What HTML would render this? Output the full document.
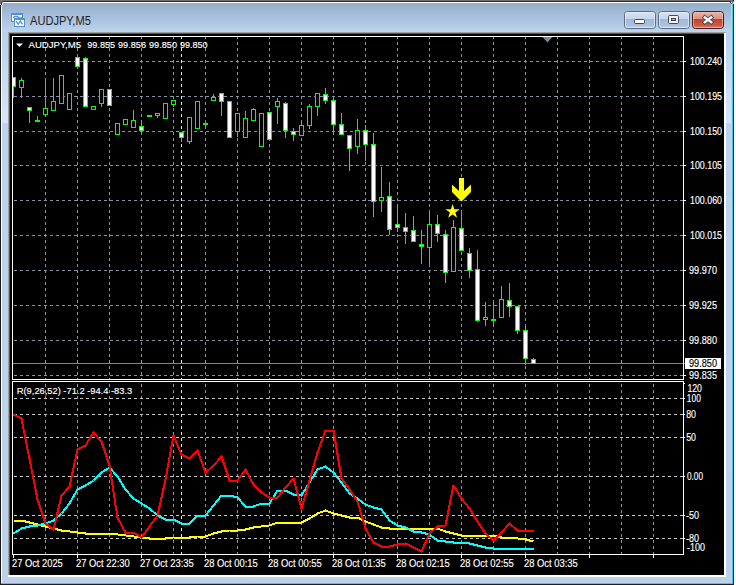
<!DOCTYPE html>
<html><head><meta charset="utf-8"><title>AUDJPY,M5</title>
<style>html,body{margin:0;padding:0;background:#fff;width:736px;height:585px;overflow:hidden;position:relative}</style>
</head><body>
<svg width="736" height="585" viewBox="0 0 736 585" style="position:absolute;left:0;top:0;display:block"><defs>
<linearGradient id="tb" x1="0" y1="0" x2="0" y2="1">
<stop offset="0" stop-color="#93adca"/><stop offset="1" stop-color="#bdd4ee"/></linearGradient>
<linearGradient id="frm" x1="0" y1="0" x2="0" y2="585" gradientUnits="userSpaceOnUse">
<stop offset="0.0547" stop-color="#b9d1eb"/><stop offset="0.2100" stop-color="#d8e6f5"/><stop offset="0.2101" stop-color="#bdd4ec"/><stop offset="1" stop-color="#bcd2ea"/></linearGradient>
<linearGradient id="btn" x1="0" y1="0" x2="0" y2="1">
<stop offset="0" stop-color="#d6e4f3"/><stop offset="0.43" stop-color="#c4d6ec"/>
<stop offset="0.45" stop-color="#a2b9d6"/><stop offset="0.8" stop-color="#aac0dc"/><stop offset="1" stop-color="#c0d3ea"/></linearGradient>
<linearGradient id="cls" x1="0" y1="0" x2="0" y2="1">
<stop offset="0" stop-color="#ecb4a6"/><stop offset="0.43" stop-color="#dd9282"/>
<stop offset="0.45" stop-color="#c0402a"/><stop offset="0.8" stop-color="#c85a44"/><stop offset="1" stop-color="#dc8470"/></linearGradient>
</defs><rect x="0" y="0" width="736" height="585" fill="#ffffff" /><rect x="0" y="0" width="734" height="585" fill="url(#frm)" /><rect x="2" y="3" width="730" height="29" fill="url(#tb)" /><rect x="0" y="0" width="734" height="1" fill="#707070" /><rect x="0" y="1" width="734" height="1" fill="#2e2e2e" /><rect x="1" y="2" width="732" height="1" fill="#ffffff" /><rect x="0" y="0" width="1" height="585" fill="#1a1a1a" /><rect x="1" y="2" width="1" height="581" fill="#ffffff" /><rect x="731" y="3" width="1" height="580" fill="#bcd4ee" /><rect x="732" y="2" width="1" height="582" fill="#40c8ee" /><rect x="733" y="0" width="1" height="585" fill="#1e1e1e" /><rect x="1" y="583" width="732" height="1" fill="#40c8ee" /><rect x="0" y="584" width="734" height="1" fill="#1e1e1e" /><rect x="0" y="0" width="1" height="1" fill="#707070" /><rect x="0" y="1" width="1" height="1" fill="#707070" /><rect x="1" y="1" width="1" height="1" fill="#707070" /><rect x="2" y="1" width="1" height="1" fill="#505050" /><rect x="3" y="1" width="1" height="1" fill="#3a3a3a" /><rect x="0" y="2" width="1" height="1" fill="#6a6a6a" /><rect x="1" y="2" width="1" height="1" fill="#3a3a3a" /><rect x="2" y="2" width="1" height="1" fill="#9a9a9a" /><rect x="3" y="2" width="1" height="1" fill="#e8e8e8" /><rect x="0" y="3" width="1" height="1" fill="#8a8a8a" /><rect x="1" y="3" width="1" height="1" fill="#2a2a2a" /><rect x="2" y="3" width="1" height="1" fill="#e6edf4" /><rect x="0" y="4" width="1" height="1" fill="#d0d0d0" /><rect x="1" y="4" width="1" height="1" fill="#2a2a2a" /><rect x="2" y="4" width="1" height="1" fill="#f0f4f8" /><rect x="731" y="1" width="1" height="1" fill="#707070" /><rect x="732" y="1" width="1" height="1" fill="#707070" /><rect x="733" y="1" width="1" height="1" fill="#707070" /><rect x="730" y="1" width="1" height="1" fill="#2a4450" /><rect x="730" y="2" width="1" height="1" fill="#2a4a58" /><rect x="731" y="2" width="1" height="1" fill="#a8e4f4" /><rect x="732" y="2" width="1" height="1" fill="#707070" /><rect x="733" y="2" width="1" height="1" fill="#d8d8d8" /><rect x="731" y="3" width="1" height="1" fill="#2e5060" /><rect x="732" y="3" width="1" height="1" fill="#8ad8f0" /><rect x="733" y="3" width="1" height="1" fill="#d0d0d0" /><rect x="732" y="4" width="1" height="1" fill="#40c8ee" /><rect x="733" y="4" width="1" height="1" fill="#1e1e1e" /><rect x="8" y="32" width="718" height="1" fill="#a0a0a0" /><rect x="8" y="32" width="1" height="545" fill="#a0a0a0" /><rect x="9" y="33" width="716" height="1" fill="#555555" /><rect x="9" y="33" width="1" height="543" fill="#555555" /><rect x="724" y="33" width="2" height="544" fill="#ffffff" /><rect x="8" y="575" width="718" height="2" fill="#ffffff" /><rect x="10" y="34" width="714" height="541" fill="#000000" /><g shape-rendering="crispEdges"><path d="M14 61h3M20 61h3M26 61h3M32 61h3M38 61h3M44 61h3M50 61h3M56 61h3M62 61h3M68 61h3M74 61h3M80 61h3M86 61h3M92 61h3M98 61h3M104 61h3M110 61h3M116 61h3M122 61h3M128 61h3M134 61h3M140 61h3M146 61h3M152 61h3M158 61h3M164 61h3M170 61h3M176 61h3M182 61h3M188 61h3M194 61h3M200 61h3M206 61h3M212 61h3M218 61h3M224 61h3M230 61h3M236 61h3M242 61h3M248 61h3M254 61h3M260 61h3M266 61h3M272 61h3M278 61h3M284 61h3M290 61h3M296 61h3M302 61h3M308 61h3M314 61h3M320 61h3M326 61h3M332 61h3M338 61h3M344 61h3M350 61h3M356 61h3M362 61h3M368 61h3M374 61h3M380 61h3M386 61h3M392 61h3M398 61h3M404 61h3M410 61h3M416 61h3M422 61h3M428 61h3M434 61h3M440 61h3M446 61h3M452 61h3M458 61h3M464 61h3M470 61h3M476 61h3M482 61h3M488 61h3M494 61h3M500 61h3M506 61h3M512 61h3M518 61h3M524 61h3M530 61h3M536 61h3M542 61h3M548 61h3M554 61h3M560 61h3M566 61h3M572 61h3M578 61h3M584 61h3M590 61h3M596 61h3M602 61h3M608 61h3M614 61h3M620 61h3M626 61h3M632 61h3M638 61h3M644 61h3M650 61h3M656 61h3M662 61h3M668 61h3M674 61h3M680 61h3" stroke="#8595a8" stroke-width="1" transform="translate(0,0.5)" fill="none"/><path d="M14 96h3M20 96h3M26 96h3M32 96h3M38 96h3M44 96h3M50 96h3M56 96h3M62 96h3M68 96h3M74 96h3M80 96h3M86 96h3M92 96h3M98 96h3M104 96h3M110 96h3M116 96h3M122 96h3M128 96h3M134 96h3M140 96h3M146 96h3M152 96h3M158 96h3M164 96h3M170 96h3M176 96h3M182 96h3M188 96h3M194 96h3M200 96h3M206 96h3M212 96h3M218 96h3M224 96h3M230 96h3M236 96h3M242 96h3M248 96h3M254 96h3M260 96h3M266 96h3M272 96h3M278 96h3M284 96h3M290 96h3M296 96h3M302 96h3M308 96h3M314 96h3M320 96h3M326 96h3M332 96h3M338 96h3M344 96h3M350 96h3M356 96h3M362 96h3M368 96h3M374 96h3M380 96h3M386 96h3M392 96h3M398 96h3M404 96h3M410 96h3M416 96h3M422 96h3M428 96h3M434 96h3M440 96h3M446 96h3M452 96h3M458 96h3M464 96h3M470 96h3M476 96h3M482 96h3M488 96h3M494 96h3M500 96h3M506 96h3M512 96h3M518 96h3M524 96h3M530 96h3M536 96h3M542 96h3M548 96h3M554 96h3M560 96h3M566 96h3M572 96h3M578 96h3M584 96h3M590 96h3M596 96h3M602 96h3M608 96h3M614 96h3M620 96h3M626 96h3M632 96h3M638 96h3M644 96h3M650 96h3M656 96h3M662 96h3M668 96h3M674 96h3M680 96h3" stroke="#8595a8" stroke-width="1" transform="translate(0,0.5)" fill="none"/><path d="M14 131h3M20 131h3M26 131h3M32 131h3M38 131h3M44 131h3M50 131h3M56 131h3M62 131h3M68 131h3M74 131h3M80 131h3M86 131h3M92 131h3M98 131h3M104 131h3M110 131h3M116 131h3M122 131h3M128 131h3M134 131h3M140 131h3M146 131h3M152 131h3M158 131h3M164 131h3M170 131h3M176 131h3M182 131h3M188 131h3M194 131h3M200 131h3M206 131h3M212 131h3M218 131h3M224 131h3M230 131h3M236 131h3M242 131h3M248 131h3M254 131h3M260 131h3M266 131h3M272 131h3M278 131h3M284 131h3M290 131h3M296 131h3M302 131h3M308 131h3M314 131h3M320 131h3M326 131h3M332 131h3M338 131h3M344 131h3M350 131h3M356 131h3M362 131h3M368 131h3M374 131h3M380 131h3M386 131h3M392 131h3M398 131h3M404 131h3M410 131h3M416 131h3M422 131h3M428 131h3M434 131h3M440 131h3M446 131h3M452 131h3M458 131h3M464 131h3M470 131h3M476 131h3M482 131h3M488 131h3M494 131h3M500 131h3M506 131h3M512 131h3M518 131h3M524 131h3M530 131h3M536 131h3M542 131h3M548 131h3M554 131h3M560 131h3M566 131h3M572 131h3M578 131h3M584 131h3M590 131h3M596 131h3M602 131h3M608 131h3M614 131h3M620 131h3M626 131h3M632 131h3M638 131h3M644 131h3M650 131h3M656 131h3M662 131h3M668 131h3M674 131h3M680 131h3" stroke="#8595a8" stroke-width="1" transform="translate(0,0.5)" fill="none"/><path d="M14 165h3M20 165h3M26 165h3M32 165h3M38 165h3M44 165h3M50 165h3M56 165h3M62 165h3M68 165h3M74 165h3M80 165h3M86 165h3M92 165h3M98 165h3M104 165h3M110 165h3M116 165h3M122 165h3M128 165h3M134 165h3M140 165h3M146 165h3M152 165h3M158 165h3M164 165h3M170 165h3M176 165h3M182 165h3M188 165h3M194 165h3M200 165h3M206 165h3M212 165h3M218 165h3M224 165h3M230 165h3M236 165h3M242 165h3M248 165h3M254 165h3M260 165h3M266 165h3M272 165h3M278 165h3M284 165h3M290 165h3M296 165h3M302 165h3M308 165h3M314 165h3M320 165h3M326 165h3M332 165h3M338 165h3M344 165h3M350 165h3M356 165h3M362 165h3M368 165h3M374 165h3M380 165h3M386 165h3M392 165h3M398 165h3M404 165h3M410 165h3M416 165h3M422 165h3M428 165h3M434 165h3M440 165h3M446 165h3M452 165h3M458 165h3M464 165h3M470 165h3M476 165h3M482 165h3M488 165h3M494 165h3M500 165h3M506 165h3M512 165h3M518 165h3M524 165h3M530 165h3M536 165h3M542 165h3M548 165h3M554 165h3M560 165h3M566 165h3M572 165h3M578 165h3M584 165h3M590 165h3M596 165h3M602 165h3M608 165h3M614 165h3M620 165h3M626 165h3M632 165h3M638 165h3M644 165h3M650 165h3M656 165h3M662 165h3M668 165h3M674 165h3M680 165h3" stroke="#8595a8" stroke-width="1" transform="translate(0,0.5)" fill="none"/><path d="M14 200h3M20 200h3M26 200h3M32 200h3M38 200h3M44 200h3M50 200h3M56 200h3M62 200h3M68 200h3M74 200h3M80 200h3M86 200h3M92 200h3M98 200h3M104 200h3M110 200h3M116 200h3M122 200h3M128 200h3M134 200h3M140 200h3M146 200h3M152 200h3M158 200h3M164 200h3M170 200h3M176 200h3M182 200h3M188 200h3M194 200h3M200 200h3M206 200h3M212 200h3M218 200h3M224 200h3M230 200h3M236 200h3M242 200h3M248 200h3M254 200h3M260 200h3M266 200h3M272 200h3M278 200h3M284 200h3M290 200h3M296 200h3M302 200h3M308 200h3M314 200h3M320 200h3M326 200h3M332 200h3M338 200h3M344 200h3M350 200h3M356 200h3M362 200h3M368 200h3M374 200h3M380 200h3M386 200h3M392 200h3M398 200h3M404 200h3M410 200h3M416 200h3M422 200h3M428 200h3M434 200h3M440 200h3M446 200h3M452 200h3M458 200h3M464 200h3M470 200h3M476 200h3M482 200h3M488 200h3M494 200h3M500 200h3M506 200h3M512 200h3M518 200h3M524 200h3M530 200h3M536 200h3M542 200h3M548 200h3M554 200h3M560 200h3M566 200h3M572 200h3M578 200h3M584 200h3M590 200h3M596 200h3M602 200h3M608 200h3M614 200h3M620 200h3M626 200h3M632 200h3M638 200h3M644 200h3M650 200h3M656 200h3M662 200h3M668 200h3M674 200h3M680 200h3" stroke="#8595a8" stroke-width="1" transform="translate(0,0.5)" fill="none"/><path d="M14 235h3M20 235h3M26 235h3M32 235h3M38 235h3M44 235h3M50 235h3M56 235h3M62 235h3M68 235h3M74 235h3M80 235h3M86 235h3M92 235h3M98 235h3M104 235h3M110 235h3M116 235h3M122 235h3M128 235h3M134 235h3M140 235h3M146 235h3M152 235h3M158 235h3M164 235h3M170 235h3M176 235h3M182 235h3M188 235h3M194 235h3M200 235h3M206 235h3M212 235h3M218 235h3M224 235h3M230 235h3M236 235h3M242 235h3M248 235h3M254 235h3M260 235h3M266 235h3M272 235h3M278 235h3M284 235h3M290 235h3M296 235h3M302 235h3M308 235h3M314 235h3M320 235h3M326 235h3M332 235h3M338 235h3M344 235h3M350 235h3M356 235h3M362 235h3M368 235h3M374 235h3M380 235h3M386 235h3M392 235h3M398 235h3M404 235h3M410 235h3M416 235h3M422 235h3M428 235h3M434 235h3M440 235h3M446 235h3M452 235h3M458 235h3M464 235h3M470 235h3M476 235h3M482 235h3M488 235h3M494 235h3M500 235h3M506 235h3M512 235h3M518 235h3M524 235h3M530 235h3M536 235h3M542 235h3M548 235h3M554 235h3M560 235h3M566 235h3M572 235h3M578 235h3M584 235h3M590 235h3M596 235h3M602 235h3M608 235h3M614 235h3M620 235h3M626 235h3M632 235h3M638 235h3M644 235h3M650 235h3M656 235h3M662 235h3M668 235h3M674 235h3M680 235h3" stroke="#8595a8" stroke-width="1" transform="translate(0,0.5)" fill="none"/><path d="M14 270h3M20 270h3M26 270h3M32 270h3M38 270h3M44 270h3M50 270h3M56 270h3M62 270h3M68 270h3M74 270h3M80 270h3M86 270h3M92 270h3M98 270h3M104 270h3M110 270h3M116 270h3M122 270h3M128 270h3M134 270h3M140 270h3M146 270h3M152 270h3M158 270h3M164 270h3M170 270h3M176 270h3M182 270h3M188 270h3M194 270h3M200 270h3M206 270h3M212 270h3M218 270h3M224 270h3M230 270h3M236 270h3M242 270h3M248 270h3M254 270h3M260 270h3M266 270h3M272 270h3M278 270h3M284 270h3M290 270h3M296 270h3M302 270h3M308 270h3M314 270h3M320 270h3M326 270h3M332 270h3M338 270h3M344 270h3M350 270h3M356 270h3M362 270h3M368 270h3M374 270h3M380 270h3M386 270h3M392 270h3M398 270h3M404 270h3M410 270h3M416 270h3M422 270h3M428 270h3M434 270h3M440 270h3M446 270h3M452 270h3M458 270h3M464 270h3M470 270h3M476 270h3M482 270h3M488 270h3M494 270h3M500 270h3M506 270h3M512 270h3M518 270h3M524 270h3M530 270h3M536 270h3M542 270h3M548 270h3M554 270h3M560 270h3M566 270h3M572 270h3M578 270h3M584 270h3M590 270h3M596 270h3M602 270h3M608 270h3M614 270h3M620 270h3M626 270h3M632 270h3M638 270h3M644 270h3M650 270h3M656 270h3M662 270h3M668 270h3M674 270h3M680 270h3" stroke="#8595a8" stroke-width="1" transform="translate(0,0.5)" fill="none"/><path d="M14 305h3M20 305h3M26 305h3M32 305h3M38 305h3M44 305h3M50 305h3M56 305h3M62 305h3M68 305h3M74 305h3M80 305h3M86 305h3M92 305h3M98 305h3M104 305h3M110 305h3M116 305h3M122 305h3M128 305h3M134 305h3M140 305h3M146 305h3M152 305h3M158 305h3M164 305h3M170 305h3M176 305h3M182 305h3M188 305h3M194 305h3M200 305h3M206 305h3M212 305h3M218 305h3M224 305h3M230 305h3M236 305h3M242 305h3M248 305h3M254 305h3M260 305h3M266 305h3M272 305h3M278 305h3M284 305h3M290 305h3M296 305h3M302 305h3M308 305h3M314 305h3M320 305h3M326 305h3M332 305h3M338 305h3M344 305h3M350 305h3M356 305h3M362 305h3M368 305h3M374 305h3M380 305h3M386 305h3M392 305h3M398 305h3M404 305h3M410 305h3M416 305h3M422 305h3M428 305h3M434 305h3M440 305h3M446 305h3M452 305h3M458 305h3M464 305h3M470 305h3M476 305h3M482 305h3M488 305h3M494 305h3M500 305h3M506 305h3M512 305h3M518 305h3M524 305h3M530 305h3M536 305h3M542 305h3M548 305h3M554 305h3M560 305h3M566 305h3M572 305h3M578 305h3M584 305h3M590 305h3M596 305h3M602 305h3M608 305h3M614 305h3M620 305h3M626 305h3M632 305h3M638 305h3M644 305h3M650 305h3M656 305h3M662 305h3M668 305h3M674 305h3M680 305h3" stroke="#8595a8" stroke-width="1" transform="translate(0,0.5)" fill="none"/><path d="M14 340h3M20 340h3M26 340h3M32 340h3M38 340h3M44 340h3M50 340h3M56 340h3M62 340h3M68 340h3M74 340h3M80 340h3M86 340h3M92 340h3M98 340h3M104 340h3M110 340h3M116 340h3M122 340h3M128 340h3M134 340h3M140 340h3M146 340h3M152 340h3M158 340h3M164 340h3M170 340h3M176 340h3M182 340h3M188 340h3M194 340h3M200 340h3M206 340h3M212 340h3M218 340h3M224 340h3M230 340h3M236 340h3M242 340h3M248 340h3M254 340h3M260 340h3M266 340h3M272 340h3M278 340h3M284 340h3M290 340h3M296 340h3M302 340h3M308 340h3M314 340h3M320 340h3M326 340h3M332 340h3M338 340h3M344 340h3M350 340h3M356 340h3M362 340h3M368 340h3M374 340h3M380 340h3M386 340h3M392 340h3M398 340h3M404 340h3M410 340h3M416 340h3M422 340h3M428 340h3M434 340h3M440 340h3M446 340h3M452 340h3M458 340h3M464 340h3M470 340h3M476 340h3M482 340h3M488 340h3M494 340h3M500 340h3M506 340h3M512 340h3M518 340h3M524 340h3M530 340h3M536 340h3M542 340h3M548 340h3M554 340h3M560 340h3M566 340h3M572 340h3M578 340h3M584 340h3M590 340h3M596 340h3M602 340h3M608 340h3M614 340h3M620 340h3M626 340h3M632 340h3M638 340h3M644 340h3M650 340h3M656 340h3M662 340h3M668 340h3M674 340h3M680 340h3" stroke="#8595a8" stroke-width="1" transform="translate(0,0.5)" fill="none"/><path d="M14 375h3M20 375h3M26 375h3M32 375h3M38 375h3M44 375h3M50 375h3M56 375h3M62 375h3M68 375h3M74 375h3M80 375h3M86 375h3M92 375h3M98 375h3M104 375h3M110 375h3M116 375h3M122 375h3M128 375h3M134 375h3M140 375h3M146 375h3M152 375h3M158 375h3M164 375h3M170 375h3M176 375h3M182 375h3M188 375h3M194 375h3M200 375h3M206 375h3M212 375h3M218 375h3M224 375h3M230 375h3M236 375h3M242 375h3M248 375h3M254 375h3M260 375h3M266 375h3M272 375h3M278 375h3M284 375h3M290 375h3M296 375h3M302 375h3M308 375h3M314 375h3M320 375h3M326 375h3M332 375h3M338 375h3M344 375h3M350 375h3M356 375h3M362 375h3M368 375h3M374 375h3M380 375h3M386 375h3M392 375h3M398 375h3M404 375h3M410 375h3M416 375h3M422 375h3M428 375h3M434 375h3M440 375h3M446 375h3M452 375h3M458 375h3M464 375h3M470 375h3M476 375h3M482 375h3M488 375h3M494 375h3M500 375h3M506 375h3M512 375h3M518 375h3M524 375h3M530 375h3M536 375h3M542 375h3M548 375h3M554 375h3M560 375h3M566 375h3M572 375h3M578 375h3M584 375h3M590 375h3M596 375h3M602 375h3M608 375h3M614 375h3M620 375h3M626 375h3M632 375h3M638 375h3M644 375h3M650 375h3M656 375h3M662 375h3M668 375h3M674 375h3M680 375h3" stroke="#8595a8" stroke-width="1" transform="translate(0,0.5)" fill="none"/><path d="M45 37v2M45 42v3M45 48v3M45 54v3M45 60v3M45 66v3M45 72v3M45 78v3M45 84v3M45 90v3M45 96v3M45 102v3M45 108v3M45 114v3M45 120v3M45 126v3M45 132v3M45 138v3M45 144v3M45 150v3M45 156v3M45 162v3M45 168v3M45 174v3M45 180v3M45 186v3M45 192v3M45 198v3M45 204v3M45 210v3M45 216v3M45 222v3M45 228v3M45 234v3M45 240v3M45 246v3M45 252v3M45 258v3M45 264v3M45 270v3M45 276v3M45 282v3M45 288v3M45 294v3M45 300v3M45 306v3M45 312v3M45 318v3M45 324v3M45 330v3M45 336v3M45 342v3M45 348v3M45 354v3M45 360v3M45 366v3M45 372v3M45 378v1" stroke="#8595a8" stroke-width="1" transform="translate(0.5,0)" fill="none"/><path d="M45 384v3M45 390v3M45 396v3M45 402v3M45 408v3M45 414v3M45 420v3M45 426v3M45 432v3M45 438v3M45 444v3M45 450v3M45 456v3M45 462v3M45 468v3M45 474v3M45 480v3M45 486v3M45 492v3M45 498v3M45 504v3M45 510v3M45 516v3M45 522v3M45 528v3M45 534v3M45 540v3M45 546v3M45 552v2" stroke="#8595a8" stroke-width="1" transform="translate(0.5,0)" fill="none"/><path d="M77 37v2M77 42v3M77 48v3M77 54v3M77 60v3M77 66v3M77 72v3M77 78v3M77 84v3M77 90v3M77 96v3M77 102v3M77 108v3M77 114v3M77 120v3M77 126v3M77 132v3M77 138v3M77 144v3M77 150v3M77 156v3M77 162v3M77 168v3M77 174v3M77 180v3M77 186v3M77 192v3M77 198v3M77 204v3M77 210v3M77 216v3M77 222v3M77 228v3M77 234v3M77 240v3M77 246v3M77 252v3M77 258v3M77 264v3M77 270v3M77 276v3M77 282v3M77 288v3M77 294v3M77 300v3M77 306v3M77 312v3M77 318v3M77 324v3M77 330v3M77 336v3M77 342v3M77 348v3M77 354v3M77 360v3M77 366v3M77 372v3M77 378v1" stroke="#8595a8" stroke-width="1" transform="translate(0.5,0)" fill="none"/><path d="M77 384v3M77 390v3M77 396v3M77 402v3M77 408v3M77 414v3M77 420v3M77 426v3M77 432v3M77 438v3M77 444v3M77 450v3M77 456v3M77 462v3M77 468v3M77 474v3M77 480v3M77 486v3M77 492v3M77 498v3M77 504v3M77 510v3M77 516v3M77 522v3M77 528v3M77 534v3M77 540v3M77 546v3M77 552v2" stroke="#8595a8" stroke-width="1" transform="translate(0.5,0)" fill="none"/><path d="M109 37v2M109 42v3M109 48v3M109 54v3M109 60v3M109 66v3M109 72v3M109 78v3M109 84v3M109 90v3M109 96v3M109 102v3M109 108v3M109 114v3M109 120v3M109 126v3M109 132v3M109 138v3M109 144v3M109 150v3M109 156v3M109 162v3M109 168v3M109 174v3M109 180v3M109 186v3M109 192v3M109 198v3M109 204v3M109 210v3M109 216v3M109 222v3M109 228v3M109 234v3M109 240v3M109 246v3M109 252v3M109 258v3M109 264v3M109 270v3M109 276v3M109 282v3M109 288v3M109 294v3M109 300v3M109 306v3M109 312v3M109 318v3M109 324v3M109 330v3M109 336v3M109 342v3M109 348v3M109 354v3M109 360v3M109 366v3M109 372v3M109 378v1" stroke="#8595a8" stroke-width="1" transform="translate(0.5,0)" fill="none"/><path d="M109 384v3M109 390v3M109 396v3M109 402v3M109 408v3M109 414v3M109 420v3M109 426v3M109 432v3M109 438v3M109 444v3M109 450v3M109 456v3M109 462v3M109 468v3M109 474v3M109 480v3M109 486v3M109 492v3M109 498v3M109 504v3M109 510v3M109 516v3M109 522v3M109 528v3M109 534v3M109 540v3M109 546v3M109 552v2" stroke="#8595a8" stroke-width="1" transform="translate(0.5,0)" fill="none"/><path d="M141 37v2M141 42v3M141 48v3M141 54v3M141 60v3M141 66v3M141 72v3M141 78v3M141 84v3M141 90v3M141 96v3M141 102v3M141 108v3M141 114v3M141 120v3M141 126v3M141 132v3M141 138v3M141 144v3M141 150v3M141 156v3M141 162v3M141 168v3M141 174v3M141 180v3M141 186v3M141 192v3M141 198v3M141 204v3M141 210v3M141 216v3M141 222v3M141 228v3M141 234v3M141 240v3M141 246v3M141 252v3M141 258v3M141 264v3M141 270v3M141 276v3M141 282v3M141 288v3M141 294v3M141 300v3M141 306v3M141 312v3M141 318v3M141 324v3M141 330v3M141 336v3M141 342v3M141 348v3M141 354v3M141 360v3M141 366v3M141 372v3M141 378v1" stroke="#8595a8" stroke-width="1" transform="translate(0.5,0)" fill="none"/><path d="M141 384v3M141 390v3M141 396v3M141 402v3M141 408v3M141 414v3M141 420v3M141 426v3M141 432v3M141 438v3M141 444v3M141 450v3M141 456v3M141 462v3M141 468v3M141 474v3M141 480v3M141 486v3M141 492v3M141 498v3M141 504v3M141 510v3M141 516v3M141 522v3M141 528v3M141 534v3M141 540v3M141 546v3M141 552v2" stroke="#8595a8" stroke-width="1" transform="translate(0.5,0)" fill="none"/><path d="M173 37v2M173 42v3M173 48v3M173 54v3M173 60v3M173 66v3M173 72v3M173 78v3M173 84v3M173 90v3M173 96v3M173 102v3M173 108v3M173 114v3M173 120v3M173 126v3M173 132v3M173 138v3M173 144v3M173 150v3M173 156v3M173 162v3M173 168v3M173 174v3M173 180v3M173 186v3M173 192v3M173 198v3M173 204v3M173 210v3M173 216v3M173 222v3M173 228v3M173 234v3M173 240v3M173 246v3M173 252v3M173 258v3M173 264v3M173 270v3M173 276v3M173 282v3M173 288v3M173 294v3M173 300v3M173 306v3M173 312v3M173 318v3M173 324v3M173 330v3M173 336v3M173 342v3M173 348v3M173 354v3M173 360v3M173 366v3M173 372v3M173 378v1" stroke="#8595a8" stroke-width="1" transform="translate(0.5,0)" fill="none"/><path d="M173 384v3M173 390v3M173 396v3M173 402v3M173 408v3M173 414v3M173 420v3M173 426v3M173 432v3M173 438v3M173 444v3M173 450v3M173 456v3M173 462v3M173 468v3M173 474v3M173 480v3M173 486v3M173 492v3M173 498v3M173 504v3M173 510v3M173 516v3M173 522v3M173 528v3M173 534v3M173 540v3M173 546v3M173 552v2" stroke="#8595a8" stroke-width="1" transform="translate(0.5,0)" fill="none"/><path d="M205 37v2M205 42v3M205 48v3M205 54v3M205 60v3M205 66v3M205 72v3M205 78v3M205 84v3M205 90v3M205 96v3M205 102v3M205 108v3M205 114v3M205 120v3M205 126v3M205 132v3M205 138v3M205 144v3M205 150v3M205 156v3M205 162v3M205 168v3M205 174v3M205 180v3M205 186v3M205 192v3M205 198v3M205 204v3M205 210v3M205 216v3M205 222v3M205 228v3M205 234v3M205 240v3M205 246v3M205 252v3M205 258v3M205 264v3M205 270v3M205 276v3M205 282v3M205 288v3M205 294v3M205 300v3M205 306v3M205 312v3M205 318v3M205 324v3M205 330v3M205 336v3M205 342v3M205 348v3M205 354v3M205 360v3M205 366v3M205 372v3M205 378v1" stroke="#8595a8" stroke-width="1" transform="translate(0.5,0)" fill="none"/><path d="M205 384v3M205 390v3M205 396v3M205 402v3M205 408v3M205 414v3M205 420v3M205 426v3M205 432v3M205 438v3M205 444v3M205 450v3M205 456v3M205 462v3M205 468v3M205 474v3M205 480v3M205 486v3M205 492v3M205 498v3M205 504v3M205 510v3M205 516v3M205 522v3M205 528v3M205 534v3M205 540v3M205 546v3M205 552v2" stroke="#8595a8" stroke-width="1" transform="translate(0.5,0)" fill="none"/><path d="M237 37v2M237 42v3M237 48v3M237 54v3M237 60v3M237 66v3M237 72v3M237 78v3M237 84v3M237 90v3M237 96v3M237 102v3M237 108v3M237 114v3M237 120v3M237 126v3M237 132v3M237 138v3M237 144v3M237 150v3M237 156v3M237 162v3M237 168v3M237 174v3M237 180v3M237 186v3M237 192v3M237 198v3M237 204v3M237 210v3M237 216v3M237 222v3M237 228v3M237 234v3M237 240v3M237 246v3M237 252v3M237 258v3M237 264v3M237 270v3M237 276v3M237 282v3M237 288v3M237 294v3M237 300v3M237 306v3M237 312v3M237 318v3M237 324v3M237 330v3M237 336v3M237 342v3M237 348v3M237 354v3M237 360v3M237 366v3M237 372v3M237 378v1" stroke="#8595a8" stroke-width="1" transform="translate(0.5,0)" fill="none"/><path d="M237 384v3M237 390v3M237 396v3M237 402v3M237 408v3M237 414v3M237 420v3M237 426v3M237 432v3M237 438v3M237 444v3M237 450v3M237 456v3M237 462v3M237 468v3M237 474v3M237 480v3M237 486v3M237 492v3M237 498v3M237 504v3M237 510v3M237 516v3M237 522v3M237 528v3M237 534v3M237 540v3M237 546v3M237 552v2" stroke="#8595a8" stroke-width="1" transform="translate(0.5,0)" fill="none"/><path d="M269 37v2M269 42v3M269 48v3M269 54v3M269 60v3M269 66v3M269 72v3M269 78v3M269 84v3M269 90v3M269 96v3M269 102v3M269 108v3M269 114v3M269 120v3M269 126v3M269 132v3M269 138v3M269 144v3M269 150v3M269 156v3M269 162v3M269 168v3M269 174v3M269 180v3M269 186v3M269 192v3M269 198v3M269 204v3M269 210v3M269 216v3M269 222v3M269 228v3M269 234v3M269 240v3M269 246v3M269 252v3M269 258v3M269 264v3M269 270v3M269 276v3M269 282v3M269 288v3M269 294v3M269 300v3M269 306v3M269 312v3M269 318v3M269 324v3M269 330v3M269 336v3M269 342v3M269 348v3M269 354v3M269 360v3M269 366v3M269 372v3M269 378v1" stroke="#8595a8" stroke-width="1" transform="translate(0.5,0)" fill="none"/><path d="M269 384v3M269 390v3M269 396v3M269 402v3M269 408v3M269 414v3M269 420v3M269 426v3M269 432v3M269 438v3M269 444v3M269 450v3M269 456v3M269 462v3M269 468v3M269 474v3M269 480v3M269 486v3M269 492v3M269 498v3M269 504v3M269 510v3M269 516v3M269 522v3M269 528v3M269 534v3M269 540v3M269 546v3M269 552v2" stroke="#8595a8" stroke-width="1" transform="translate(0.5,0)" fill="none"/><path d="M301 37v2M301 42v3M301 48v3M301 54v3M301 60v3M301 66v3M301 72v3M301 78v3M301 84v3M301 90v3M301 96v3M301 102v3M301 108v3M301 114v3M301 120v3M301 126v3M301 132v3M301 138v3M301 144v3M301 150v3M301 156v3M301 162v3M301 168v3M301 174v3M301 180v3M301 186v3M301 192v3M301 198v3M301 204v3M301 210v3M301 216v3M301 222v3M301 228v3M301 234v3M301 240v3M301 246v3M301 252v3M301 258v3M301 264v3M301 270v3M301 276v3M301 282v3M301 288v3M301 294v3M301 300v3M301 306v3M301 312v3M301 318v3M301 324v3M301 330v3M301 336v3M301 342v3M301 348v3M301 354v3M301 360v3M301 366v3M301 372v3M301 378v1" stroke="#8595a8" stroke-width="1" transform="translate(0.5,0)" fill="none"/><path d="M301 384v3M301 390v3M301 396v3M301 402v3M301 408v3M301 414v3M301 420v3M301 426v3M301 432v3M301 438v3M301 444v3M301 450v3M301 456v3M301 462v3M301 468v3M301 474v3M301 480v3M301 486v3M301 492v3M301 498v3M301 504v3M301 510v3M301 516v3M301 522v3M301 528v3M301 534v3M301 540v3M301 546v3M301 552v2" stroke="#8595a8" stroke-width="1" transform="translate(0.5,0)" fill="none"/><path d="M333 37v2M333 42v3M333 48v3M333 54v3M333 60v3M333 66v3M333 72v3M333 78v3M333 84v3M333 90v3M333 96v3M333 102v3M333 108v3M333 114v3M333 120v3M333 126v3M333 132v3M333 138v3M333 144v3M333 150v3M333 156v3M333 162v3M333 168v3M333 174v3M333 180v3M333 186v3M333 192v3M333 198v3M333 204v3M333 210v3M333 216v3M333 222v3M333 228v3M333 234v3M333 240v3M333 246v3M333 252v3M333 258v3M333 264v3M333 270v3M333 276v3M333 282v3M333 288v3M333 294v3M333 300v3M333 306v3M333 312v3M333 318v3M333 324v3M333 330v3M333 336v3M333 342v3M333 348v3M333 354v3M333 360v3M333 366v3M333 372v3M333 378v1" stroke="#8595a8" stroke-width="1" transform="translate(0.5,0)" fill="none"/><path d="M333 384v3M333 390v3M333 396v3M333 402v3M333 408v3M333 414v3M333 420v3M333 426v3M333 432v3M333 438v3M333 444v3M333 450v3M333 456v3M333 462v3M333 468v3M333 474v3M333 480v3M333 486v3M333 492v3M333 498v3M333 504v3M333 510v3M333 516v3M333 522v3M333 528v3M333 534v3M333 540v3M333 546v3M333 552v2" stroke="#8595a8" stroke-width="1" transform="translate(0.5,0)" fill="none"/><path d="M365 37v2M365 42v3M365 48v3M365 54v3M365 60v3M365 66v3M365 72v3M365 78v3M365 84v3M365 90v3M365 96v3M365 102v3M365 108v3M365 114v3M365 120v3M365 126v3M365 132v3M365 138v3M365 144v3M365 150v3M365 156v3M365 162v3M365 168v3M365 174v3M365 180v3M365 186v3M365 192v3M365 198v3M365 204v3M365 210v3M365 216v3M365 222v3M365 228v3M365 234v3M365 240v3M365 246v3M365 252v3M365 258v3M365 264v3M365 270v3M365 276v3M365 282v3M365 288v3M365 294v3M365 300v3M365 306v3M365 312v3M365 318v3M365 324v3M365 330v3M365 336v3M365 342v3M365 348v3M365 354v3M365 360v3M365 366v3M365 372v3M365 378v1" stroke="#8595a8" stroke-width="1" transform="translate(0.5,0)" fill="none"/><path d="M365 384v3M365 390v3M365 396v3M365 402v3M365 408v3M365 414v3M365 420v3M365 426v3M365 432v3M365 438v3M365 444v3M365 450v3M365 456v3M365 462v3M365 468v3M365 474v3M365 480v3M365 486v3M365 492v3M365 498v3M365 504v3M365 510v3M365 516v3M365 522v3M365 528v3M365 534v3M365 540v3M365 546v3M365 552v2" stroke="#8595a8" stroke-width="1" transform="translate(0.5,0)" fill="none"/><path d="M397 37v2M397 42v3M397 48v3M397 54v3M397 60v3M397 66v3M397 72v3M397 78v3M397 84v3M397 90v3M397 96v3M397 102v3M397 108v3M397 114v3M397 120v3M397 126v3M397 132v3M397 138v3M397 144v3M397 150v3M397 156v3M397 162v3M397 168v3M397 174v3M397 180v3M397 186v3M397 192v3M397 198v3M397 204v3M397 210v3M397 216v3M397 222v3M397 228v3M397 234v3M397 240v3M397 246v3M397 252v3M397 258v3M397 264v3M397 270v3M397 276v3M397 282v3M397 288v3M397 294v3M397 300v3M397 306v3M397 312v3M397 318v3M397 324v3M397 330v3M397 336v3M397 342v3M397 348v3M397 354v3M397 360v3M397 366v3M397 372v3M397 378v1" stroke="#8595a8" stroke-width="1" transform="translate(0.5,0)" fill="none"/><path d="M397 384v3M397 390v3M397 396v3M397 402v3M397 408v3M397 414v3M397 420v3M397 426v3M397 432v3M397 438v3M397 444v3M397 450v3M397 456v3M397 462v3M397 468v3M397 474v3M397 480v3M397 486v3M397 492v3M397 498v3M397 504v3M397 510v3M397 516v3M397 522v3M397 528v3M397 534v3M397 540v3M397 546v3M397 552v2" stroke="#8595a8" stroke-width="1" transform="translate(0.5,0)" fill="none"/><path d="M429 37v2M429 42v3M429 48v3M429 54v3M429 60v3M429 66v3M429 72v3M429 78v3M429 84v3M429 90v3M429 96v3M429 102v3M429 108v3M429 114v3M429 120v3M429 126v3M429 132v3M429 138v3M429 144v3M429 150v3M429 156v3M429 162v3M429 168v3M429 174v3M429 180v3M429 186v3M429 192v3M429 198v3M429 204v3M429 210v3M429 216v3M429 222v3M429 228v3M429 234v3M429 240v3M429 246v3M429 252v3M429 258v3M429 264v3M429 270v3M429 276v3M429 282v3M429 288v3M429 294v3M429 300v3M429 306v3M429 312v3M429 318v3M429 324v3M429 330v3M429 336v3M429 342v3M429 348v3M429 354v3M429 360v3M429 366v3M429 372v3M429 378v1" stroke="#8595a8" stroke-width="1" transform="translate(0.5,0)" fill="none"/><path d="M429 384v3M429 390v3M429 396v3M429 402v3M429 408v3M429 414v3M429 420v3M429 426v3M429 432v3M429 438v3M429 444v3M429 450v3M429 456v3M429 462v3M429 468v3M429 474v3M429 480v3M429 486v3M429 492v3M429 498v3M429 504v3M429 510v3M429 516v3M429 522v3M429 528v3M429 534v3M429 540v3M429 546v3M429 552v2" stroke="#8595a8" stroke-width="1" transform="translate(0.5,0)" fill="none"/><path d="M461 37v2M461 42v3M461 48v3M461 54v3M461 60v3M461 66v3M461 72v3M461 78v3M461 84v3M461 90v3M461 96v3M461 102v3M461 108v3M461 114v3M461 120v3M461 126v3M461 132v3M461 138v3M461 144v3M461 150v3M461 156v3M461 162v3M461 168v3M461 174v3M461 180v3M461 186v3M461 192v3M461 198v3M461 204v3M461 210v3M461 216v3M461 222v3M461 228v3M461 234v3M461 240v3M461 246v3M461 252v3M461 258v3M461 264v3M461 270v3M461 276v3M461 282v3M461 288v3M461 294v3M461 300v3M461 306v3M461 312v3M461 318v3M461 324v3M461 330v3M461 336v3M461 342v3M461 348v3M461 354v3M461 360v3M461 366v3M461 372v3M461 378v1" stroke="#8595a8" stroke-width="1" transform="translate(0.5,0)" fill="none"/><path d="M461 384v3M461 390v3M461 396v3M461 402v3M461 408v3M461 414v3M461 420v3M461 426v3M461 432v3M461 438v3M461 444v3M461 450v3M461 456v3M461 462v3M461 468v3M461 474v3M461 480v3M461 486v3M461 492v3M461 498v3M461 504v3M461 510v3M461 516v3M461 522v3M461 528v3M461 534v3M461 540v3M461 546v3M461 552v2" stroke="#8595a8" stroke-width="1" transform="translate(0.5,0)" fill="none"/><path d="M493 37v2M493 42v3M493 48v3M493 54v3M493 60v3M493 66v3M493 72v3M493 78v3M493 84v3M493 90v3M493 96v3M493 102v3M493 108v3M493 114v3M493 120v3M493 126v3M493 132v3M493 138v3M493 144v3M493 150v3M493 156v3M493 162v3M493 168v3M493 174v3M493 180v3M493 186v3M493 192v3M493 198v3M493 204v3M493 210v3M493 216v3M493 222v3M493 228v3M493 234v3M493 240v3M493 246v3M493 252v3M493 258v3M493 264v3M493 270v3M493 276v3M493 282v3M493 288v3M493 294v3M493 300v3M493 306v3M493 312v3M493 318v3M493 324v3M493 330v3M493 336v3M493 342v3M493 348v3M493 354v3M493 360v3M493 366v3M493 372v3M493 378v1" stroke="#8595a8" stroke-width="1" transform="translate(0.5,0)" fill="none"/><path d="M493 384v3M493 390v3M493 396v3M493 402v3M493 408v3M493 414v3M493 420v3M493 426v3M493 432v3M493 438v3M493 444v3M493 450v3M493 456v3M493 462v3M493 468v3M493 474v3M493 480v3M493 486v3M493 492v3M493 498v3M493 504v3M493 510v3M493 516v3M493 522v3M493 528v3M493 534v3M493 540v3M493 546v3M493 552v2" stroke="#8595a8" stroke-width="1" transform="translate(0.5,0)" fill="none"/><path d="M525 37v2M525 42v3M525 48v3M525 54v3M525 60v3M525 66v3M525 72v3M525 78v3M525 84v3M525 90v3M525 96v3M525 102v3M525 108v3M525 114v3M525 120v3M525 126v3M525 132v3M525 138v3M525 144v3M525 150v3M525 156v3M525 162v3M525 168v3M525 174v3M525 180v3M525 186v3M525 192v3M525 198v3M525 204v3M525 210v3M525 216v3M525 222v3M525 228v3M525 234v3M525 240v3M525 246v3M525 252v3M525 258v3M525 264v3M525 270v3M525 276v3M525 282v3M525 288v3M525 294v3M525 300v3M525 306v3M525 312v3M525 318v3M525 324v3M525 330v3M525 336v3M525 342v3M525 348v3M525 354v3M525 360v3M525 366v3M525 372v3M525 378v1" stroke="#8595a8" stroke-width="1" transform="translate(0.5,0)" fill="none"/><path d="M525 384v3M525 390v3M525 396v3M525 402v3M525 408v3M525 414v3M525 420v3M525 426v3M525 432v3M525 438v3M525 444v3M525 450v3M525 456v3M525 462v3M525 468v3M525 474v3M525 480v3M525 486v3M525 492v3M525 498v3M525 504v3M525 510v3M525 516v3M525 522v3M525 528v3M525 534v3M525 540v3M525 546v3M525 552v2" stroke="#8595a8" stroke-width="1" transform="translate(0.5,0)" fill="none"/><path d="M557 37v2M557 42v3M557 48v3M557 54v3M557 60v3M557 66v3M557 72v3M557 78v3M557 84v3M557 90v3M557 96v3M557 102v3M557 108v3M557 114v3M557 120v3M557 126v3M557 132v3M557 138v3M557 144v3M557 150v3M557 156v3M557 162v3M557 168v3M557 174v3M557 180v3M557 186v3M557 192v3M557 198v3M557 204v3M557 210v3M557 216v3M557 222v3M557 228v3M557 234v3M557 240v3M557 246v3M557 252v3M557 258v3M557 264v3M557 270v3M557 276v3M557 282v3M557 288v3M557 294v3M557 300v3M557 306v3M557 312v3M557 318v3M557 324v3M557 330v3M557 336v3M557 342v3M557 348v3M557 354v3M557 360v3M557 366v3M557 372v3M557 378v1" stroke="#8595a8" stroke-width="1" transform="translate(0.5,0)" fill="none"/><path d="M557 384v3M557 390v3M557 396v3M557 402v3M557 408v3M557 414v3M557 420v3M557 426v3M557 432v3M557 438v3M557 444v3M557 450v3M557 456v3M557 462v3M557 468v3M557 474v3M557 480v3M557 486v3M557 492v3M557 498v3M557 504v3M557 510v3M557 516v3M557 522v3M557 528v3M557 534v3M557 540v3M557 546v3M557 552v2" stroke="#8595a8" stroke-width="1" transform="translate(0.5,0)" fill="none"/><path d="M589 37v2M589 42v3M589 48v3M589 54v3M589 60v3M589 66v3M589 72v3M589 78v3M589 84v3M589 90v3M589 96v3M589 102v3M589 108v3M589 114v3M589 120v3M589 126v3M589 132v3M589 138v3M589 144v3M589 150v3M589 156v3M589 162v3M589 168v3M589 174v3M589 180v3M589 186v3M589 192v3M589 198v3M589 204v3M589 210v3M589 216v3M589 222v3M589 228v3M589 234v3M589 240v3M589 246v3M589 252v3M589 258v3M589 264v3M589 270v3M589 276v3M589 282v3M589 288v3M589 294v3M589 300v3M589 306v3M589 312v3M589 318v3M589 324v3M589 330v3M589 336v3M589 342v3M589 348v3M589 354v3M589 360v3M589 366v3M589 372v3M589 378v1" stroke="#8595a8" stroke-width="1" transform="translate(0.5,0)" fill="none"/><path d="M589 384v3M589 390v3M589 396v3M589 402v3M589 408v3M589 414v3M589 420v3M589 426v3M589 432v3M589 438v3M589 444v3M589 450v3M589 456v3M589 462v3M589 468v3M589 474v3M589 480v3M589 486v3M589 492v3M589 498v3M589 504v3M589 510v3M589 516v3M589 522v3M589 528v3M589 534v3M589 540v3M589 546v3M589 552v2" stroke="#8595a8" stroke-width="1" transform="translate(0.5,0)" fill="none"/><path d="M621 37v2M621 42v3M621 48v3M621 54v3M621 60v3M621 66v3M621 72v3M621 78v3M621 84v3M621 90v3M621 96v3M621 102v3M621 108v3M621 114v3M621 120v3M621 126v3M621 132v3M621 138v3M621 144v3M621 150v3M621 156v3M621 162v3M621 168v3M621 174v3M621 180v3M621 186v3M621 192v3M621 198v3M621 204v3M621 210v3M621 216v3M621 222v3M621 228v3M621 234v3M621 240v3M621 246v3M621 252v3M621 258v3M621 264v3M621 270v3M621 276v3M621 282v3M621 288v3M621 294v3M621 300v3M621 306v3M621 312v3M621 318v3M621 324v3M621 330v3M621 336v3M621 342v3M621 348v3M621 354v3M621 360v3M621 366v3M621 372v3M621 378v1" stroke="#8595a8" stroke-width="1" transform="translate(0.5,0)" fill="none"/><path d="M621 384v3M621 390v3M621 396v3M621 402v3M621 408v3M621 414v3M621 420v3M621 426v3M621 432v3M621 438v3M621 444v3M621 450v3M621 456v3M621 462v3M621 468v3M621 474v3M621 480v3M621 486v3M621 492v3M621 498v3M621 504v3M621 510v3M621 516v3M621 522v3M621 528v3M621 534v3M621 540v3M621 546v3M621 552v2" stroke="#8595a8" stroke-width="1" transform="translate(0.5,0)" fill="none"/><path d="M653 37v2M653 42v3M653 48v3M653 54v3M653 60v3M653 66v3M653 72v3M653 78v3M653 84v3M653 90v3M653 96v3M653 102v3M653 108v3M653 114v3M653 120v3M653 126v3M653 132v3M653 138v3M653 144v3M653 150v3M653 156v3M653 162v3M653 168v3M653 174v3M653 180v3M653 186v3M653 192v3M653 198v3M653 204v3M653 210v3M653 216v3M653 222v3M653 228v3M653 234v3M653 240v3M653 246v3M653 252v3M653 258v3M653 264v3M653 270v3M653 276v3M653 282v3M653 288v3M653 294v3M653 300v3M653 306v3M653 312v3M653 318v3M653 324v3M653 330v3M653 336v3M653 342v3M653 348v3M653 354v3M653 360v3M653 366v3M653 372v3M653 378v1" stroke="#8595a8" stroke-width="1" transform="translate(0.5,0)" fill="none"/><path d="M653 384v3M653 390v3M653 396v3M653 402v3M653 408v3M653 414v3M653 420v3M653 426v3M653 432v3M653 438v3M653 444v3M653 450v3M653 456v3M653 462v3M653 468v3M653 474v3M653 480v3M653 486v3M653 492v3M653 498v3M653 504v3M653 510v3M653 516v3M653 522v3M653 528v3M653 534v3M653 540v3M653 546v3M653 552v2" stroke="#8595a8" stroke-width="1" transform="translate(0.5,0)" fill="none"/><path d="M14 398h3M20 398h3M26 398h3M32 398h3M38 398h3M44 398h3M50 398h3M56 398h3M62 398h3M68 398h3M74 398h3M80 398h3M86 398h3M92 398h3M98 398h3M104 398h3M110 398h3M116 398h3M122 398h3M128 398h3M134 398h3M140 398h3M146 398h3M152 398h3M158 398h3M164 398h3M170 398h3M176 398h3M182 398h3M188 398h3M194 398h3M200 398h3M206 398h3M212 398h3M218 398h3M224 398h3M230 398h3M236 398h3M242 398h3M248 398h3M254 398h3M260 398h3M266 398h3M272 398h3M278 398h3M284 398h3M290 398h3M296 398h3M302 398h3M308 398h3M314 398h3M320 398h3M326 398h3M332 398h3M338 398h3M344 398h3M350 398h3M356 398h3M362 398h3M368 398h3M374 398h3M380 398h3M386 398h3M392 398h3M398 398h3M404 398h3M410 398h3M416 398h3M422 398h3M428 398h3M434 398h3M440 398h3M446 398h3M452 398h3M458 398h3M464 398h3M470 398h3M476 398h3M482 398h3M488 398h3M494 398h3M500 398h3M506 398h3M512 398h3M518 398h3M524 398h3M530 398h3M536 398h3M542 398h3M548 398h3M554 398h3M560 398h3M566 398h3M572 398h3M578 398h3M584 398h3M590 398h3M596 398h3M602 398h3M608 398h3M614 398h3M620 398h3M626 398h3M632 398h3M638 398h3M644 398h3M650 398h3M656 398h3M662 398h3M668 398h3M674 398h3M680 398h3" stroke="#c8c8c8" stroke-width="1" transform="translate(0,0.5)" fill="none"/><path d="M14 414h3M20 414h3M26 414h3M32 414h3M38 414h3M44 414h3M50 414h3M56 414h3M62 414h3M68 414h3M74 414h3M80 414h3M86 414h3M92 414h3M98 414h3M104 414h3M110 414h3M116 414h3M122 414h3M128 414h3M134 414h3M140 414h3M146 414h3M152 414h3M158 414h3M164 414h3M170 414h3M176 414h3M182 414h3M188 414h3M194 414h3M200 414h3M206 414h3M212 414h3M218 414h3M224 414h3M230 414h3M236 414h3M242 414h3M248 414h3M254 414h3M260 414h3M266 414h3M272 414h3M278 414h3M284 414h3M290 414h3M296 414h3M302 414h3M308 414h3M314 414h3M320 414h3M326 414h3M332 414h3M338 414h3M344 414h3M350 414h3M356 414h3M362 414h3M368 414h3M374 414h3M380 414h3M386 414h3M392 414h3M398 414h3M404 414h3M410 414h3M416 414h3M422 414h3M428 414h3M434 414h3M440 414h3M446 414h3M452 414h3M458 414h3M464 414h3M470 414h3M476 414h3M482 414h3M488 414h3M494 414h3M500 414h3M506 414h3M512 414h3M518 414h3M524 414h3M530 414h3M536 414h3M542 414h3M548 414h3M554 414h3M560 414h3M566 414h3M572 414h3M578 414h3M584 414h3M590 414h3M596 414h3M602 414h3M608 414h3M614 414h3M620 414h3M626 414h3M632 414h3M638 414h3M644 414h3M650 414h3M656 414h3M662 414h3M668 414h3M674 414h3M680 414h3" stroke="#c8c8c8" stroke-width="1" transform="translate(0,0.5)" fill="none"/><path d="M14 437h3M20 437h3M26 437h3M32 437h3M38 437h3M44 437h3M50 437h3M56 437h3M62 437h3M68 437h3M74 437h3M80 437h3M86 437h3M92 437h3M98 437h3M104 437h3M110 437h3M116 437h3M122 437h3M128 437h3M134 437h3M140 437h3M146 437h3M152 437h3M158 437h3M164 437h3M170 437h3M176 437h3M182 437h3M188 437h3M194 437h3M200 437h3M206 437h3M212 437h3M218 437h3M224 437h3M230 437h3M236 437h3M242 437h3M248 437h3M254 437h3M260 437h3M266 437h3M272 437h3M278 437h3M284 437h3M290 437h3M296 437h3M302 437h3M308 437h3M314 437h3M320 437h3M326 437h3M332 437h3M338 437h3M344 437h3M350 437h3M356 437h3M362 437h3M368 437h3M374 437h3M380 437h3M386 437h3M392 437h3M398 437h3M404 437h3M410 437h3M416 437h3M422 437h3M428 437h3M434 437h3M440 437h3M446 437h3M452 437h3M458 437h3M464 437h3M470 437h3M476 437h3M482 437h3M488 437h3M494 437h3M500 437h3M506 437h3M512 437h3M518 437h3M524 437h3M530 437h3M536 437h3M542 437h3M548 437h3M554 437h3M560 437h3M566 437h3M572 437h3M578 437h3M584 437h3M590 437h3M596 437h3M602 437h3M608 437h3M614 437h3M620 437h3M626 437h3M632 437h3M638 437h3M644 437h3M650 437h3M656 437h3M662 437h3M668 437h3M674 437h3M680 437h3" stroke="#c8c8c8" stroke-width="1" transform="translate(0,0.5)" fill="none"/><path d="M14 476h3M20 476h3M26 476h3M32 476h3M38 476h3M44 476h3M50 476h3M56 476h3M62 476h3M68 476h3M74 476h3M80 476h3M86 476h3M92 476h3M98 476h3M104 476h3M110 476h3M116 476h3M122 476h3M128 476h3M134 476h3M140 476h3M146 476h3M152 476h3M158 476h3M164 476h3M170 476h3M176 476h3M182 476h3M188 476h3M194 476h3M200 476h3M206 476h3M212 476h3M218 476h3M224 476h3M230 476h3M236 476h3M242 476h3M248 476h3M254 476h3M260 476h3M266 476h3M272 476h3M278 476h3M284 476h3M290 476h3M296 476h3M302 476h3M308 476h3M314 476h3M320 476h3M326 476h3M332 476h3M338 476h3M344 476h3M350 476h3M356 476h3M362 476h3M368 476h3M374 476h3M380 476h3M386 476h3M392 476h3M398 476h3M404 476h3M410 476h3M416 476h3M422 476h3M428 476h3M434 476h3M440 476h3M446 476h3M452 476h3M458 476h3M464 476h3M470 476h3M476 476h3M482 476h3M488 476h3M494 476h3M500 476h3M506 476h3M512 476h3M518 476h3M524 476h3M530 476h3M536 476h3M542 476h3M548 476h3M554 476h3M560 476h3M566 476h3M572 476h3M578 476h3M584 476h3M590 476h3M596 476h3M602 476h3M608 476h3M614 476h3M620 476h3M626 476h3M632 476h3M638 476h3M644 476h3M650 476h3M656 476h3M662 476h3M668 476h3M674 476h3M680 476h3" stroke="#c8c8c8" stroke-width="1" transform="translate(0,0.5)" fill="none"/><path d="M14 515h3M20 515h3M26 515h3M32 515h3M38 515h3M44 515h3M50 515h3M56 515h3M62 515h3M68 515h3M74 515h3M80 515h3M86 515h3M92 515h3M98 515h3M104 515h3M110 515h3M116 515h3M122 515h3M128 515h3M134 515h3M140 515h3M146 515h3M152 515h3M158 515h3M164 515h3M170 515h3M176 515h3M182 515h3M188 515h3M194 515h3M200 515h3M206 515h3M212 515h3M218 515h3M224 515h3M230 515h3M236 515h3M242 515h3M248 515h3M254 515h3M260 515h3M266 515h3M272 515h3M278 515h3M284 515h3M290 515h3M296 515h3M302 515h3M308 515h3M314 515h3M320 515h3M326 515h3M332 515h3M338 515h3M344 515h3M350 515h3M356 515h3M362 515h3M368 515h3M374 515h3M380 515h3M386 515h3M392 515h3M398 515h3M404 515h3M410 515h3M416 515h3M422 515h3M428 515h3M434 515h3M440 515h3M446 515h3M452 515h3M458 515h3M464 515h3M470 515h3M476 515h3M482 515h3M488 515h3M494 515h3M500 515h3M506 515h3M512 515h3M518 515h3M524 515h3M530 515h3M536 515h3M542 515h3M548 515h3M554 515h3M560 515h3M566 515h3M572 515h3M578 515h3M584 515h3M590 515h3M596 515h3M602 515h3M608 515h3M614 515h3M620 515h3M626 515h3M632 515h3M638 515h3M644 515h3M650 515h3M656 515h3M662 515h3M668 515h3M674 515h3M680 515h3" stroke="#c8c8c8" stroke-width="1" transform="translate(0,0.5)" fill="none"/><path d="M14 538h3M20 538h3M26 538h3M32 538h3M38 538h3M44 538h3M50 538h3M56 538h3M62 538h3M68 538h3M74 538h3M80 538h3M86 538h3M92 538h3M98 538h3M104 538h3M110 538h3M116 538h3M122 538h3M128 538h3M134 538h3M140 538h3M146 538h3M152 538h3M158 538h3M164 538h3M170 538h3M176 538h3M182 538h3M188 538h3M194 538h3M200 538h3M206 538h3M212 538h3M218 538h3M224 538h3M230 538h3M236 538h3M242 538h3M248 538h3M254 538h3M260 538h3M266 538h3M272 538h3M278 538h3M284 538h3M290 538h3M296 538h3M302 538h3M308 538h3M314 538h3M320 538h3M326 538h3M332 538h3M338 538h3M344 538h3M350 538h3M356 538h3M362 538h3M368 538h3M374 538h3M380 538h3M386 538h3M392 538h3M398 538h3M404 538h3M410 538h3M416 538h3M422 538h3M428 538h3M434 538h3M440 538h3M446 538h3M452 538h3M458 538h3M464 538h3M470 538h3M476 538h3M482 538h3M488 538h3M494 538h3M500 538h3M506 538h3M512 538h3M518 538h3M524 538h3M530 538h3M536 538h3M542 538h3M548 538h3M554 538h3M560 538h3M566 538h3M572 538h3M578 538h3M584 538h3M590 538h3M596 538h3M602 538h3M608 538h3M614 538h3M620 538h3M626 538h3M632 538h3M638 538h3M644 538h3M650 538h3M656 538h3M662 538h3M668 538h3M674 538h3M680 538h3" stroke="#c8c8c8" stroke-width="1" transform="translate(0,0.5)" fill="none"/><path d="M181 37v2M181 42v3M181 48v3M181 54v3M181 60v3M181 66v3M181 72v3M181 78v3M181 84v3M181 90v3M181 96v3M181 102v3M181 108v3M181 114v3M181 120v3M181 126v3M181 132v3M181 138v3M181 144v3M181 150v3M181 156v3M181 162v3M181 168v3M181 174v3M181 180v3M181 186v3M181 192v3M181 198v3M181 204v3M181 210v3M181 216v3M181 222v3M181 228v3M181 234v3M181 240v3M181 246v3M181 252v3M181 258v3M181 264v3M181 270v3M181 276v3M181 282v3M181 288v3M181 294v3M181 300v3M181 306v3M181 312v3M181 318v3M181 324v3M181 330v3M181 336v3M181 342v3M181 348v3M181 354v3M181 360v3M181 366v3M181 372v3M181 378v1" stroke="#e6e6e6" stroke-width="1" transform="translate(0.5,0)" fill="none"/><path d="M181 384v3M181 390v3M181 396v3M181 402v3M181 408v3M181 414v3M181 420v3M181 426v3M181 432v3M181 438v3M181 444v3M181 450v3M181 456v3M181 462v3M181 468v3M181 474v3M181 480v3M181 486v3M181 492v3M181 498v3M181 504v3M181 510v3M181 516v3M181 522v3M181 528v3M181 534v3M181 540v3M181 546v3M181 552v2" stroke="#e6e6e6" stroke-width="1" transform="translate(0.5,0)" fill="none"/><rect x="13" y="363" width="672" height="1" fill="#778899" /><rect x="12" y="36" width="672" height="1" fill="#ffffff" /><rect x="12" y="36" width="1" height="344" fill="#ffffff" /><rect x="683" y="36" width="1" height="344" fill="#ffffff" /><rect x="12" y="379" width="672" height="1" fill="#ffffff" /><rect x="12" y="381" width="672" height="1" fill="#ffffff" /><rect x="12" y="381" width="1" height="174" fill="#ffffff" /><rect x="683" y="381" width="1" height="174" fill="#ffffff" /><rect x="12" y="554" width="672" height="1" fill="#ffffff" /><rect x="684" y="61" width="2" height="1" fill="#ffffff" /><rect x="684" y="96" width="2" height="1" fill="#ffffff" /><rect x="684" y="131" width="2" height="1" fill="#ffffff" /><rect x="684" y="165" width="2" height="1" fill="#ffffff" /><rect x="684" y="200" width="2" height="1" fill="#ffffff" /><rect x="684" y="235" width="2" height="1" fill="#ffffff" /><rect x="684" y="270" width="2" height="1" fill="#ffffff" /><rect x="684" y="305" width="2" height="1" fill="#ffffff" /><rect x="684" y="340" width="2" height="1" fill="#ffffff" /><rect x="684" y="375" width="2" height="1" fill="#ffffff" /><rect x="684" y="383" width="1" height="1" fill="#ffffff" /><rect x="684" y="398" width="1" height="1" fill="#ffffff" /><rect x="684" y="414" width="1" height="1" fill="#ffffff" /><rect x="684" y="437" width="1" height="1" fill="#ffffff" /><rect x="684" y="476" width="1" height="1" fill="#ffffff" /><rect x="684" y="515" width="1" height="1" fill="#ffffff" /><rect x="684" y="538" width="1" height="1" fill="#ffffff" /><rect x="13" y="555" width="1" height="3" fill="#ffffff" /><rect x="77" y="555" width="1" height="3" fill="#ffffff" /><rect x="141" y="555" width="1" height="3" fill="#ffffff" /><rect x="205" y="555" width="1" height="3" fill="#ffffff" /><rect x="269" y="555" width="1" height="3" fill="#ffffff" /><rect x="333" y="555" width="1" height="3" fill="#ffffff" /><rect x="397" y="555" width="1" height="3" fill="#ffffff" /><rect x="461" y="555" width="1" height="3" fill="#ffffff" /><rect x="525" y="555" width="1" height="3" fill="#ffffff" /><rect x="589" y="555" width="1" height="3" fill="#ffffff" /><rect x="653" y="555" width="1" height="3" fill="#ffffff" /><polygon points="542.5,37 552.5,37 547.5,42.5" fill="#778899" shape-rendering="auto"/><g clip-path="url(#cc)"><rect x="13" y="77" width="1" height="21" fill="#00ff00" /><rect x="11" y="77" width="5" height="10" fill="#00ff00" /><rect x="12" y="78" width="3" height="8" fill="#ffffff" /><rect x="21" y="78" width="1" height="20" fill="#00ff00" /><rect x="19" y="80" width="5" height="8" fill="#00ff00" /><rect x="20" y="81" width="3" height="6" fill="#000000" /><rect x="29" y="107" width="1" height="16" fill="#00ff00" /><rect x="27" y="107" width="5" height="4" fill="#00ff00" /><rect x="28" y="108" width="3" height="2" fill="#ffffff" /><rect x="37" y="116" width="1" height="6" fill="#00ff00" /><rect x="35" y="120" width="5" height="2" fill="#00ff00" /><rect x="45" y="79" width="1" height="37" fill="#00ff00" /><rect x="43" y="108" width="5" height="7" fill="#00ff00" /><rect x="44" y="109" width="3" height="5" fill="#000000" /><rect x="53" y="78" width="1" height="33" fill="#00ff00" /><rect x="51" y="101" width="5" height="10" fill="#00ff00" /><rect x="52" y="102" width="3" height="8" fill="#000000" /><rect x="61" y="75" width="1" height="29" fill="#00ff00" /><rect x="59" y="75" width="5" height="29" fill="#00ff00" /><rect x="60" y="76" width="3" height="27" fill="#000000" /><rect x="69" y="93" width="1" height="17" fill="#00ff00" /><rect x="67" y="93" width="5" height="17" fill="#00ff00" /><rect x="68" y="94" width="3" height="15" fill="#000000" /><rect x="77" y="57" width="1" height="10" fill="#00ff00" /><rect x="75" y="57" width="5" height="10" fill="#00ff00" /><rect x="76" y="58" width="3" height="8" fill="#ffffff" /><rect x="85" y="57" width="1" height="50" fill="#00ff00" /><rect x="83" y="58" width="5" height="49" fill="#00ff00" /><rect x="84" y="59" width="3" height="47" fill="#ffffff" /><rect x="93" y="106" width="1" height="4" fill="#00ff00" /><rect x="91" y="106" width="5" height="4" fill="#00ff00" /><rect x="92" y="107" width="3" height="2" fill="#000000" /><rect x="101" y="89" width="1" height="18" fill="#00ff00" /><rect x="99" y="89" width="5" height="15" fill="#00ff00" /><rect x="100" y="90" width="3" height="13" fill="#000000" /><rect x="109" y="89" width="1" height="17" fill="#00ff00" /><rect x="107" y="89" width="5" height="17" fill="#00ff00" /><rect x="108" y="90" width="3" height="15" fill="#ffffff" /><rect x="117" y="123" width="1" height="12" fill="#00ff00" /><rect x="115" y="123" width="5" height="12" fill="#00ff00" /><rect x="116" y="124" width="3" height="10" fill="#000000" /><rect x="125" y="119" width="1" height="6" fill="#00ff00" /><rect x="123" y="119" width="5" height="6" fill="#00ff00" /><rect x="124" y="120" width="3" height="4" fill="#000000" /><rect x="133" y="110" width="1" height="18" fill="#00ff00" /><rect x="131" y="120" width="5" height="8" fill="#00ff00" /><rect x="132" y="121" width="3" height="6" fill="#000000" /><rect x="141" y="123" width="1" height="8" fill="#00ff00" /><rect x="139" y="126" width="5" height="5" fill="#00ff00" /><rect x="140" y="127" width="3" height="3" fill="#ffffff" /><rect x="149" y="115" width="1" height="2" fill="#00ff00" /><rect x="147" y="115" width="5" height="2" fill="#00ff00" /><rect x="157" y="113" width="1" height="5" fill="#00ff00" /><rect x="155" y="113" width="5" height="3" fill="#00ff00" /><rect x="156" y="114" width="3" height="1" fill="#000000" /><rect x="165" y="103" width="1" height="16" fill="#00ff00" /><rect x="163" y="103" width="5" height="16" fill="#00ff00" /><rect x="164" y="104" width="3" height="14" fill="#000000" /><rect x="173" y="100" width="1" height="7" fill="#00ff00" /><rect x="171" y="100" width="5" height="5" fill="#00ff00" /><rect x="172" y="101" width="3" height="3" fill="#000000" /><rect x="181" y="132" width="1" height="10" fill="#00ff00" /><rect x="179" y="132" width="5" height="6" fill="#00ff00" /><rect x="180" y="133" width="3" height="4" fill="#ffffff" /><rect x="189" y="117" width="1" height="27" fill="#00ff00" /><rect x="187" y="117" width="5" height="25" fill="#00ff00" /><rect x="188" y="118" width="3" height="23" fill="#000000" /><rect x="197" y="101" width="1" height="28" fill="#00ff00" /><rect x="195" y="101" width="5" height="28" fill="#00ff00" /><rect x="196" y="102" width="3" height="26" fill="#000000" /><rect x="205" y="121" width="1" height="7" fill="#00ff00" /><rect x="203" y="123" width="5" height="2" fill="#00ff00" /><rect x="213" y="94" width="1" height="7" fill="#00ff00" /><rect x="211" y="97" width="5" height="4" fill="#00ff00" /><rect x="212" y="98" width="3" height="2" fill="#000000" /><rect x="221" y="93" width="1" height="23" fill="#00ff00" /><rect x="219" y="93" width="5" height="9" fill="#00ff00" /><rect x="220" y="94" width="3" height="7" fill="#ffffff" /><rect x="229" y="101" width="1" height="37" fill="#00ff00" /><rect x="227" y="101" width="5" height="37" fill="#00ff00" /><rect x="228" y="102" width="3" height="35" fill="#ffffff" /><rect x="237" y="113" width="1" height="24" fill="#00ff00" /><rect x="235" y="113" width="5" height="19" fill="#00ff00" /><rect x="236" y="114" width="3" height="17" fill="#000000" /><rect x="245" y="111" width="1" height="27" fill="#00ff00" /><rect x="243" y="118" width="5" height="20" fill="#00ff00" /><rect x="244" y="119" width="3" height="18" fill="#000000" /><rect x="253" y="108" width="1" height="13" fill="#00ff00" /><rect x="251" y="109" width="5" height="12" fill="#00ff00" /><rect x="252" y="110" width="3" height="10" fill="#000000" /><rect x="261" y="113" width="1" height="34" fill="#00ff00" /><rect x="259" y="113" width="5" height="34" fill="#00ff00" /><rect x="260" y="114" width="3" height="32" fill="#000000" /><rect x="269" y="112" width="1" height="28" fill="#00ff00" /><rect x="267" y="112" width="5" height="28" fill="#00ff00" /><rect x="268" y="113" width="3" height="26" fill="#ffffff" /><rect x="277" y="98" width="1" height="26" fill="#00ff00" /><rect x="275" y="101" width="5" height="6" fill="#00ff00" /><rect x="276" y="102" width="3" height="4" fill="#000000" /><rect x="285" y="102" width="1" height="36" fill="#00ff00" /><rect x="283" y="103" width="5" height="28" fill="#00ff00" /><rect x="284" y="104" width="3" height="26" fill="#ffffff" /><rect x="293" y="128" width="1" height="13" fill="#00ff00" /><rect x="291" y="131" width="5" height="4" fill="#00ff00" /><rect x="292" y="132" width="3" height="2" fill="#ffffff" /><rect x="301" y="122" width="1" height="14" fill="#00ff00" /><rect x="299" y="125" width="5" height="11" fill="#00ff00" /><rect x="300" y="126" width="3" height="9" fill="#000000" /><rect x="309" y="104" width="1" height="25" fill="#00ff00" /><rect x="307" y="106" width="5" height="20" fill="#00ff00" /><rect x="308" y="107" width="3" height="18" fill="#000000" /><rect x="317" y="93" width="1" height="23" fill="#00ff00" /><rect x="315" y="93" width="5" height="14" fill="#00ff00" /><rect x="316" y="94" width="3" height="12" fill="#000000" /><rect x="325" y="88" width="1" height="16" fill="#00ff00" /><rect x="323" y="94" width="5" height="7" fill="#00ff00" /><rect x="324" y="95" width="3" height="5" fill="#ffffff" /><rect x="333" y="97" width="1" height="35" fill="#00ff00" /><rect x="331" y="100" width="5" height="25" fill="#00ff00" /><rect x="332" y="101" width="3" height="23" fill="#ffffff" /><rect x="341" y="113" width="1" height="22" fill="#00ff00" /><rect x="339" y="124" width="5" height="11" fill="#00ff00" /><rect x="340" y="125" width="3" height="9" fill="#ffffff" /><rect x="349" y="135" width="1" height="36" fill="#00ff00" /><rect x="347" y="135" width="5" height="14" fill="#00ff00" /><rect x="348" y="136" width="3" height="12" fill="#ffffff" /><rect x="357" y="119" width="1" height="35" fill="#00ff00" /><rect x="355" y="130" width="5" height="17" fill="#00ff00" /><rect x="356" y="131" width="3" height="15" fill="#000000" /><rect x="365" y="125" width="1" height="36" fill="#00ff00" /><rect x="363" y="130" width="5" height="15" fill="#00ff00" /><rect x="364" y="131" width="3" height="13" fill="#ffffff" /><rect x="373" y="133" width="1" height="84" fill="#00ff00" /><rect x="371" y="144" width="5" height="58" fill="#00ff00" /><rect x="372" y="145" width="3" height="56" fill="#ffffff" /><rect x="381" y="167" width="1" height="45" fill="#00ff00" /><rect x="379" y="197" width="5" height="4" fill="#00ff00" /><rect x="380" y="198" width="3" height="2" fill="#000000" /><rect x="389" y="182" width="1" height="53" fill="#00ff00" /><rect x="387" y="196" width="5" height="34" fill="#00ff00" /><rect x="388" y="197" width="3" height="32" fill="#ffffff" /><rect x="397" y="206" width="1" height="26" fill="#00ff00" /><rect x="395" y="224" width="5" height="4" fill="#00ff00" /><rect x="396" y="225" width="3" height="2" fill="#ffffff" /><rect x="405" y="213" width="1" height="31" fill="#00ff00" /><rect x="403" y="227" width="5" height="5" fill="#00ff00" /><rect x="404" y="228" width="3" height="3" fill="#ffffff" /><rect x="413" y="216" width="1" height="26" fill="#00ff00" /><rect x="411" y="230" width="5" height="12" fill="#00ff00" /><rect x="412" y="231" width="3" height="10" fill="#ffffff" /><rect x="421" y="230" width="1" height="34" fill="#00ff00" /><rect x="419" y="244" width="5" height="3" fill="#00ff00" /><rect x="420" y="245" width="3" height="1" fill="#ffffff" /><rect x="429" y="210" width="1" height="54" fill="#00ff00" /><rect x="427" y="224" width="5" height="24" fill="#00ff00" /><rect x="428" y="225" width="3" height="22" fill="#000000" /><rect x="437" y="215" width="1" height="27" fill="#00ff00" /><rect x="435" y="224" width="5" height="10" fill="#00ff00" /><rect x="436" y="225" width="3" height="8" fill="#ffffff" /><rect x="445" y="230" width="1" height="53" fill="#00ff00" /><rect x="443" y="234" width="5" height="39" fill="#00ff00" /><rect x="444" y="235" width="3" height="37" fill="#ffffff" /><rect x="453" y="220" width="1" height="52" fill="#00ff00" /><rect x="451" y="227" width="5" height="45" fill="#00ff00" /><rect x="452" y="228" width="3" height="43" fill="#000000" /><rect x="461" y="213" width="1" height="38" fill="#00ff00" /><rect x="459" y="228" width="5" height="23" fill="#00ff00" /><rect x="460" y="229" width="3" height="21" fill="#ffffff" /><rect x="469" y="248" width="1" height="30" fill="#00ff00" /><rect x="467" y="253" width="5" height="18" fill="#00ff00" /><rect x="468" y="254" width="3" height="16" fill="#ffffff" /><rect x="477" y="250" width="1" height="72" fill="#00ff00" /><rect x="475" y="269" width="5" height="52" fill="#00ff00" /><rect x="476" y="270" width="3" height="50" fill="#ffffff" /><rect x="485" y="302" width="1" height="24" fill="#00ff00" /><rect x="483" y="317" width="5" height="3" fill="#00ff00" /><rect x="484" y="318" width="3" height="1" fill="#000000" /><rect x="493" y="302" width="1" height="25" fill="#00ff00" /><rect x="491" y="319" width="5" height="2" fill="#00ff00" /><rect x="501" y="286" width="1" height="32" fill="#00ff00" /><rect x="499" y="299" width="5" height="19" fill="#00ff00" /><rect x="500" y="300" width="3" height="17" fill="#000000" /><rect x="509" y="283" width="1" height="34" fill="#00ff00" /><rect x="507" y="300" width="5" height="7" fill="#00ff00" /><rect x="508" y="301" width="3" height="5" fill="#ffffff" /><rect x="517" y="306" width="1" height="28" fill="#00ff00" /><rect x="515" y="306" width="5" height="25" fill="#00ff00" /><rect x="516" y="307" width="3" height="23" fill="#ffffff" /><rect x="525" y="326" width="1" height="39" fill="#00ff00" /><rect x="523" y="330" width="5" height="29" fill="#00ff00" /><rect x="524" y="331" width="3" height="27" fill="#ffffff" /><rect x="533" y="358" width="1" height="6" fill="#00ff00" /><rect x="531" y="359" width="5" height="5" fill="#00ff00" /><rect x="532" y="360" width="3" height="3" fill="#ffffff" /></g><rect x="12" y="36" width="1" height="344" fill="#ffffff" /><rect x="10" y="37" width="2" height="340" fill="#000000" /></g><g clip-path="url(#ic)"><polyline points="13.5,520.5 21.5,520.5 29.5,522.5 37.5,524.5 45.5,526.5 53.5,528.5 61.5,530.5 69.5,531.5 77.5,532.5 85.5,533.5 93.5,533.5 101.5,533.5 109.5,533.5 117.5,534.5 125.5,535.5 133.5,536.5 141.5,537.5 149.5,538.5 157.5,538.5 165.5,538.5 173.5,537.5 181.5,537.5 189.5,537.5 197.5,536.5 205.5,536.5 213.5,533.5 221.5,531.5 229.5,530.5 237.5,530.5 245.5,529.5 253.5,527.5 261.5,526.5 269.5,525.5 277.5,522.5 285.5,522.5 293.5,522.5 301.5,522.5 309.5,518.5 317.5,513.5 325.5,510.5 333.5,513.5 341.5,515.5 349.5,517.5 357.5,517.5 365.5,521.5 373.5,524.5 381.5,527.5 389.5,528.5 397.5,528.5 405.5,528.5 413.5,528.5 421.5,528.5 429.5,528.5 437.5,528.5 445.5,531.5 453.5,533.5 461.5,535.5 469.5,535.5 477.5,535.5 485.5,535.5 493.5,535.5 501.5,537.5 509.5,537.5 517.5,538.5 525.5,539.5 533.5,541.5" fill="none" stroke="#ffff00" stroke-width="2" stroke-linejoin="miter" stroke-miterlimit="2" shape-rendering="crispEdges"/><polyline points="13.5,533.5 21.5,528.5 29.5,526.5 37.5,525.5 45.5,523.5 53.5,520.5 61.5,513.5 69.5,503.5 77.5,489.5 85.5,485.5 93.5,480.5 101.5,472.5 109.5,467.5 117.5,476.5 125.5,489.5 133.5,498.5 141.5,503.5 149.5,508.5 157.5,515.5 165.5,519.5 173.5,519.5 181.5,523.5 189.5,523.5 197.5,515.5 205.5,515.5 213.5,505.5 221.5,495.5 229.5,495.5 237.5,497.5 245.5,506.5 253.5,506.5 261.5,503.5 269.5,503.5 277.5,490.5 285.5,490.5 293.5,494.5 301.5,495.5 309.5,482.5 317.5,469.5 325.5,466.5 333.5,472.5 341.5,482.5 349.5,493.5 357.5,498.5 365.5,504.5 373.5,507.5 381.5,509.5 389.5,520.5 397.5,525.5 405.5,527.5 413.5,531.5 421.5,532.5 429.5,534.5 437.5,540.5 445.5,541.5 453.5,542.5 461.5,542.5 469.5,543.5 477.5,545.5 485.5,547.5 493.5,548.5 501.5,548.5 509.5,548.5 517.5,548.5 525.5,548.5 533.5,548.5" fill="none" stroke="#00ffff" stroke-width="2" stroke-linejoin="miter" stroke-miterlimit="2" shape-rendering="crispEdges"/><polyline points="13.5,414.5 21.5,418.5 29.5,458.5 37.5,499.5 45.5,523.5 53.5,529.5 61.5,495.5 69.5,486.5 77.5,449.5 85.5,445.5 93.5,432.5 101.5,441.5 109.5,465.5 117.5,517.5 125.5,532.5 133.5,532.5 141.5,537.5 149.5,526.5 157.5,515.5 165.5,479.5 173.5,435.5 181.5,454.5 189.5,458.5 197.5,450.5 205.5,472.5 213.5,465.5 221.5,456.5 229.5,480.5 237.5,480.5 245.5,469.5 253.5,484.5 261.5,492.5 269.5,497.5 277.5,497.5 285.5,487.5 293.5,478.5 301.5,508.5 309.5,480.5 317.5,452.5 325.5,430.5 333.5,430.5 341.5,478.5 349.5,489.5 357.5,501.5 365.5,528.5 373.5,542.5 381.5,546.5 389.5,546.5 397.5,544.5 405.5,543.5 413.5,547.5 421.5,551.5 429.5,533.5 437.5,526.5 445.5,525.5 453.5,485.5 461.5,498.5 469.5,508.5 477.5,521.5 485.5,533.5 493.5,540.5 501.5,532.5 509.5,523.5 517.5,530.5 525.5,530.5 533.5,530.5" fill="none" stroke="#ff0000" stroke-width="2" stroke-linejoin="miter" stroke-miterlimit="2" shape-rendering="crispEdges"/></g><clipPath id="ic"><rect x="13" y="382" width="670" height="172"/></clipPath><clipPath id="cc"><rect x="13" y="37" width="670" height="342"/></clipPath><polygon points="459,178 464,178 464,191 471,184.5 471,192 461.5,201.5 452,192 452,184.5 459,191" fill="#ffff00"/><polygon points="452.60,203.90 454.31,209.15 459.83,209.15 455.36,212.40 457.07,217.65 452.60,214.40 448.13,217.65 449.84,212.40 445.37,209.15 450.89,209.15" fill="#ffff00"/><polygon points="16,43.5 23,43.5 19.5,47" fill="#ffffff"/><text x="28.5" y="48" font-family='"Liberation Sans", sans-serif' font-size="9.7" fill="#ffffff" stroke="#ffffff" stroke-width="0.15" textLength="52.6" lengthAdjust="spacingAndGlyphs" text-anchor="start" xml:space="preserve">AUDJPY,M5</text><text x="87.2" y="48" font-family='"Liberation Sans", sans-serif' font-size="9.7" fill="#ffffff" stroke="#ffffff" stroke-width="0.15" textLength="28" lengthAdjust="spacingAndGlyphs" text-anchor="start" xml:space="preserve">99.855</text><text x="118" y="48" font-family='"Liberation Sans", sans-serif' font-size="9.7" fill="#ffffff" stroke="#ffffff" stroke-width="0.15" textLength="28" lengthAdjust="spacingAndGlyphs" text-anchor="start" xml:space="preserve">99.856</text><text x="149" y="48" font-family='"Liberation Sans", sans-serif' font-size="9.7" fill="#ffffff" stroke="#ffffff" stroke-width="0.15" textLength="28" lengthAdjust="spacingAndGlyphs" text-anchor="start" xml:space="preserve">99.850</text><text x="180" y="48" font-family='"Liberation Sans", sans-serif' font-size="9.7" fill="#ffffff" stroke="#ffffff" stroke-width="0.15" textLength="27.6" lengthAdjust="spacingAndGlyphs" text-anchor="start" xml:space="preserve">99.850</text><text x="16.8" y="394" font-family='"Liberation Sans", sans-serif' font-size="9.7" fill="#ffffff" stroke="#ffffff" stroke-width="0.15" textLength="115.4" lengthAdjust="spacingAndGlyphs" text-anchor="start" xml:space="preserve">R(9,26,52) -71.2 -94.4 -83.3</text><text x="690" y="65" font-family='"Liberation Sans", sans-serif' font-size="10.2" fill="#ffffff" stroke="#ffffff" stroke-width="0.15" textLength="32" lengthAdjust="spacingAndGlyphs" text-anchor="start" xml:space="preserve">100.240</text><text x="690" y="100" font-family='"Liberation Sans", sans-serif' font-size="10.2" fill="#ffffff" stroke="#ffffff" stroke-width="0.15" textLength="32" lengthAdjust="spacingAndGlyphs" text-anchor="start" xml:space="preserve">100.195</text><text x="690" y="135" font-family='"Liberation Sans", sans-serif' font-size="10.2" fill="#ffffff" stroke="#ffffff" stroke-width="0.15" textLength="32" lengthAdjust="spacingAndGlyphs" text-anchor="start" xml:space="preserve">100.150</text><text x="690" y="169" font-family='"Liberation Sans", sans-serif' font-size="10.2" fill="#ffffff" stroke="#ffffff" stroke-width="0.15" textLength="32" lengthAdjust="spacingAndGlyphs" text-anchor="start" xml:space="preserve">100.105</text><text x="690" y="204" font-family='"Liberation Sans", sans-serif' font-size="10.2" fill="#ffffff" stroke="#ffffff" stroke-width="0.15" textLength="32" lengthAdjust="spacingAndGlyphs" text-anchor="start" xml:space="preserve">100.060</text><text x="690" y="239" font-family='"Liberation Sans", sans-serif' font-size="10.2" fill="#ffffff" stroke="#ffffff" stroke-width="0.15" textLength="32" lengthAdjust="spacingAndGlyphs" text-anchor="start" xml:space="preserve">100.015</text><text x="689" y="274" font-family='"Liberation Sans", sans-serif' font-size="10.2" fill="#ffffff" stroke="#ffffff" stroke-width="0.15" textLength="28" lengthAdjust="spacingAndGlyphs" text-anchor="start" xml:space="preserve">99.970</text><text x="689" y="309" font-family='"Liberation Sans", sans-serif' font-size="10.2" fill="#ffffff" stroke="#ffffff" stroke-width="0.15" textLength="28" lengthAdjust="spacingAndGlyphs" text-anchor="start" xml:space="preserve">99.925</text><text x="689" y="344" font-family='"Liberation Sans", sans-serif' font-size="10.2" fill="#ffffff" stroke="#ffffff" stroke-width="0.15" textLength="28" lengthAdjust="spacingAndGlyphs" text-anchor="start" xml:space="preserve">99.880</text><text x="689" y="379" font-family='"Liberation Sans", sans-serif' font-size="10.2" fill="#ffffff" stroke="#ffffff" stroke-width="0.15" textLength="28" lengthAdjust="spacingAndGlyphs" text-anchor="start" xml:space="preserve">99.835</text><rect x="685" y="358" width="36" height="11" fill="#ffffff" /><text x="689" y="367" font-family='"Liberation Sans", sans-serif' font-size="10.2" fill="#000000" stroke="#000000" stroke-width="0.15" textLength="28" lengthAdjust="spacingAndGlyphs" text-anchor="start" xml:space="preserve">99.850</text><text x="687.4" y="392" font-family='"Liberation Sans", sans-serif' font-size="10.2" fill="#ffffff" stroke="#ffffff" stroke-width="0.15" textLength="14.6" lengthAdjust="spacingAndGlyphs" text-anchor="start" xml:space="preserve">120</text><text x="686.8" y="402" font-family='"Liberation Sans", sans-serif' font-size="10.2" fill="#ffffff" stroke="#ffffff" stroke-width="0.15" textLength="14" lengthAdjust="spacingAndGlyphs" text-anchor="start" xml:space="preserve">100</text><text x="686.2" y="418" font-family='"Liberation Sans", sans-serif' font-size="10.2" fill="#ffffff" stroke="#ffffff" stroke-width="0.15" textLength="9.8" lengthAdjust="spacingAndGlyphs" text-anchor="start" xml:space="preserve">80</text><text x="686.2" y="441" font-family='"Liberation Sans", sans-serif' font-size="10.2" fill="#ffffff" stroke="#ffffff" stroke-width="0.15" textLength="9.8" lengthAdjust="spacingAndGlyphs" text-anchor="start" xml:space="preserve">50</text><text x="687" y="480" font-family='"Liberation Sans", sans-serif' font-size="10.2" fill="#ffffff" stroke="#ffffff" stroke-width="0.15" textLength="16" lengthAdjust="spacingAndGlyphs" text-anchor="start" xml:space="preserve">0.00</text><text x="686" y="519" font-family='"Liberation Sans", sans-serif' font-size="10.2" fill="#ffffff" stroke="#ffffff" stroke-width="0.15" textLength="13" lengthAdjust="spacingAndGlyphs" text-anchor="start" xml:space="preserve">-50</text><text x="686" y="542" font-family='"Liberation Sans", sans-serif' font-size="10.2" fill="#ffffff" stroke="#ffffff" stroke-width="0.15" textLength="13" lengthAdjust="spacingAndGlyphs" text-anchor="start" xml:space="preserve">-80</text><text x="687" y="551" font-family='"Liberation Sans", sans-serif' font-size="10.2" fill="#ffffff" stroke="#ffffff" stroke-width="0.15" textLength="18" lengthAdjust="spacingAndGlyphs" text-anchor="start" xml:space="preserve">-100</text><text x="12" y="567" font-family='"Liberation Sans", sans-serif' font-size="10.2" fill="#ffffff" stroke="#ffffff" stroke-width="0.15" textLength="50.8" lengthAdjust="spacingAndGlyphs" text-anchor="start" xml:space="preserve">27 Oct 2025</text><text x="76" y="567" font-family='"Liberation Sans", sans-serif' font-size="10.2" fill="#ffffff" stroke="#ffffff" stroke-width="0.15" textLength="53.8" lengthAdjust="spacingAndGlyphs" text-anchor="start" xml:space="preserve">27 Oct 22:30</text><text x="140" y="567" font-family='"Liberation Sans", sans-serif' font-size="10.2" fill="#ffffff" stroke="#ffffff" stroke-width="0.15" textLength="53.8" lengthAdjust="spacingAndGlyphs" text-anchor="start" xml:space="preserve">27 Oct 23:35</text><text x="204" y="567" font-family='"Liberation Sans", sans-serif' font-size="10.2" fill="#ffffff" stroke="#ffffff" stroke-width="0.15" textLength="53.8" lengthAdjust="spacingAndGlyphs" text-anchor="start" xml:space="preserve">28 Oct 00:15</text><text x="268" y="567" font-family='"Liberation Sans", sans-serif' font-size="10.2" fill="#ffffff" stroke="#ffffff" stroke-width="0.15" textLength="53.8" lengthAdjust="spacingAndGlyphs" text-anchor="start" xml:space="preserve">28 Oct 00:55</text><text x="332" y="567" font-family='"Liberation Sans", sans-serif' font-size="10.2" fill="#ffffff" stroke="#ffffff" stroke-width="0.15" textLength="53.8" lengthAdjust="spacingAndGlyphs" text-anchor="start" xml:space="preserve">28 Oct 01:35</text><text x="396" y="567" font-family='"Liberation Sans", sans-serif' font-size="10.2" fill="#ffffff" stroke="#ffffff" stroke-width="0.15" textLength="53.8" lengthAdjust="spacingAndGlyphs" text-anchor="start" xml:space="preserve">28 Oct 02:15</text><text x="460" y="567" font-family='"Liberation Sans", sans-serif' font-size="10.2" fill="#ffffff" stroke="#ffffff" stroke-width="0.15" textLength="53.8" lengthAdjust="spacingAndGlyphs" text-anchor="start" xml:space="preserve">28 Oct 02:55</text><text x="524" y="567" font-family='"Liberation Sans", sans-serif' font-size="10.2" fill="#ffffff" stroke="#ffffff" stroke-width="0.15" textLength="53.8" lengthAdjust="spacingAndGlyphs" text-anchor="start" xml:space="preserve">28 Oct 03:35</text><text x="30" y="25" font-family='"Liberation Sans", sans-serif' font-size="12.3" fill="#1e1e1e" textLength="60.8" lengthAdjust="spacingAndGlyphs" text-anchor="start" xml:space="preserve">AUDJPY,M5</text><g shape-rendering="crispEdges">
<rect x="11" y="13" width="12" height="9" fill="#4b8cf6"/>
<rect x="12" y="15" width="10" height="6" fill="#fffff4"/>
<path d="M11.5 13 v9 M22.5 13 v9 M11 13.5 h12" stroke="#5e9e7a" stroke-width="1" stroke-dasharray="1 2" fill="none"/>
</g>
<polyline points="13,18 14.5,16.5 17.5,16.5 19,18 22,18" fill="none" stroke="#4b8cf6" stroke-width="1.3"/>
<g shape-rendering="crispEdges">
<rect x="14" y="18" width="11" height="9" fill="#4b8cf6"/>
<rect x="15" y="20" width="9" height="6" fill="#fffff4"/>
<path d="M14.5 18 v9 M24.5 18 v9 M14 18.5 h11 M14 26.5 h11" stroke="#5e9e7a" stroke-width="1" stroke-dasharray="1 2" fill="none"/>
</g>
<polyline points="16,21 18.2,24.4 20.3,21 22.5,24.4" fill="none" stroke="#4b8cf6" stroke-width="1.3"/>
<rect x="624.5" y="11.5" width="31" height="17" rx="3" ry="3" fill="url(#btn)" stroke="#5b6a80" stroke-width="1"/><rect x="625.5" y="12.5" width="29" height="15" rx="2" ry="2" fill="none" stroke="#e8f0fa" stroke-opacity="0.7" stroke-width="1"/><rect x="658.5" y="11.5" width="31" height="17" rx="3" ry="3" fill="url(#btn)" stroke="#5b6a80" stroke-width="1"/><rect x="659.5" y="12.5" width="29" height="15" rx="2" ry="2" fill="none" stroke="#e8f0fa" stroke-opacity="0.7" stroke-width="1"/><rect x="692.5" y="11.5" width="31" height="17" rx="3" ry="3" fill="url(#cls)" stroke="#4a1a1e" stroke-width="1"/><rect x="693.5" y="12.5" width="29" height="15" rx="2" ry="2" fill="none" stroke="#f4c8c0" stroke-opacity="0.6" stroke-width="1"/><rect x="634.5" y="19.5" width="10" height="4" rx="1" fill="#ffffff" stroke="#3a4658" stroke-width="1"/><rect x="668.5" y="15.5" width="10" height="8" rx="1.2" fill="#f4f6f8" stroke="#3e4858" stroke-width="1"/><rect x="671.5" y="18.5" width="4" height="2" fill="#9fb4cc" stroke="#3e4858" stroke-width="1"/><path d="M704.8 17.4 L711.2 22.2 M711.2 17.4 L704.8 22.2" stroke="#4a5262" stroke-width="4.2" stroke-linecap="square"/><path d="M704.8 17.4 L711.2 22.2 M711.2 17.4 L704.8 22.2" stroke="#f8f8f8" stroke-width="2.3" stroke-linecap="square"/></svg>
</body></html>
